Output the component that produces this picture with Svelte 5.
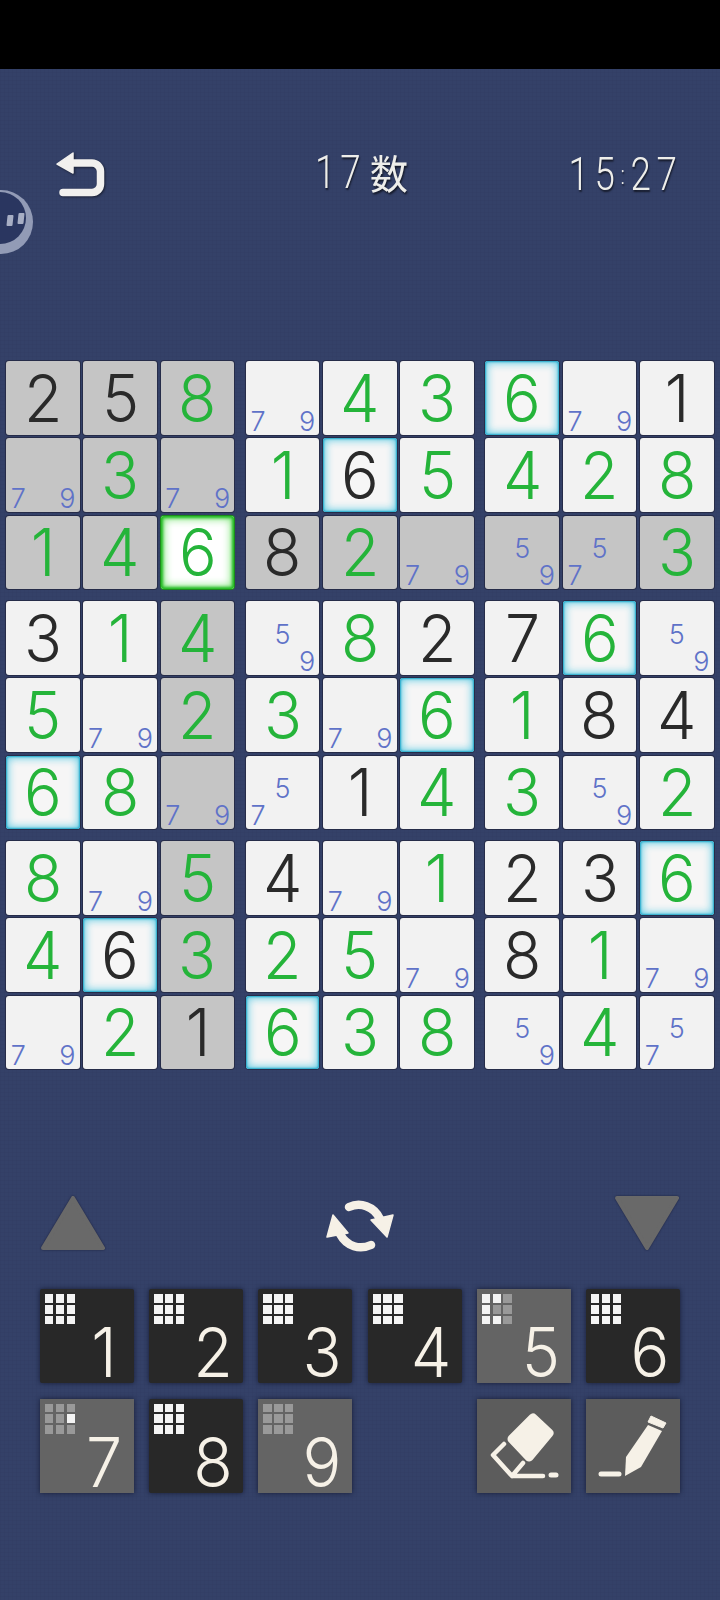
<script>
  // g = filled in green, k = given in black, n = pencil notes
  const rows = [
    'k2 k5 g8 n79 g4 g3 g6 n79 k1',
    'n79 g3 n79 g1 k6 g5 g4 g2 g8',
    'g1 g4 g6 k8 g2 n79 n59 n57 g3',
    'k3 g1 g4 n59 g8 k2 k7 g6 n59',
    'g5 n79 g2 g3 n79 g6 g1 k8 k4',
    'g6 g8 n79 n57 k1 g4 g3 n59 g2',
    'g8 n79 g5 k4 n79 g1 k2 k3 g6',
    'g4 k6 g3 g2 g5 n79 k8 g1 n79',
    'n79 g2 k1 g6 g3 g8 n59 g4 n57'
  ].map((r) => r.split(' '));

  const selected = [2, 2];

  function cell(r, c) {
    const v = rows[r][c];
    const kind = v[0];
    const val = v.slice(1);
    const sel = r === selected[0] && c === selected[1];
    const sameRow = r === selected[0];
    const sameCol = c === selected[1];
    const sameBox = Math.floor(r / 3) === Math.floor(selected[0] / 3) && Math.floor(c / 3) === Math.floor(selected[1] / 3);
    // in row, column or box of the selection, and not the selection itself
    const peer = !sel && (sameRow || sameCol || sameBox);
    const same = !sel && val === '6' && kind !== 'n';
    return { kind, val, sel, peer: peer && !same, same };
  }

  const blocks = [0, 1, 2].flatMap((br) =>
    [0, 1, 2].map((bc) =>
      [0, 1, 2].flatMap((r) => [0, 1, 2].map((c) => cell(br * 3 + r, bc * 3 + c)))
    )
  );

  const on = [1, 1, 1, 1, 1, 1, 1, 1, 1];
  const keys = [
    { n: 1, mask: on },
    { n: 2, mask: on },
    { n: 3, mask: on },
    { n: 4, mask: on },
    { n: 5, dim: true, mask: [1, 1, 0, 1, 0, 0, 1, 1, 0] },
    { n: 6, mask: on },
    { n: 7, dim: true, mask: [0, 0, 0, 0, 0, 1, 0, 0, 0] },
    { n: 8, mask: on },
    { n: 9, dim: true, mask: [0, 0, 0, 0, 0, 0, 0, 0, 0] }
  ];
</script>

<div class="screen">
  <div class="statusbar"></div>

  <header>
    <button class="back" aria-label="back">
      <svg width="50" height="46" viewBox="0 0 50 46">
        <path d="M1 13 17 2V22Z" fill="#f1f0ee" stroke="#f1f0ee" stroke-width="1.5" stroke-linejoin="round" />
        <path d="M15 12H36a8.500 8.500 0 0 1 8.500 8.500V33a8.500 8.500 0 0 1-8.500 8.500H7" fill="none" stroke="#f1f0ee" stroke-width="7.500" stroke-linecap="round" />
      </svg>
    </button>
    <div class="title"><span class="nums">17</span><span class="kanji">数</span></div>
    <div class="time"><span class="nums">15<small>:</small>27</span></div>
  </header>

  <!-- floating helper bubble stuck on the screen edge -->
  <div class="bubble">
    <div class="bubble-in">
      <i></i><i></i>
    </div>
  </div>

  <main class="board">
    {#each blocks as block}
      <div class="block">
        {#each block as c}
          <div class="cell" class:peer={c.peer} class:sel={c.sel} class:same={c.same}>
            {#if c.kind === 'n'}
              <div class="notes">
                {#each [1, 2, 3, 4, 5, 6, 7, 8, 9] as d}
                  <span>{c.val.includes(String(d)) ? d : ''}</span>
                {/each}
              </div>
            {:else}
              <span class="num" class:green={c.kind === 'g'}>{c.val}</span>
            {/if}
          </div>
        {/each}
      </div>
    {/each}
  </main>

  <div class="controls">
    <svg class="tri" width="66" height="60" viewBox="0 0 66 60">
      <path d="M33 5 63 55H3Z" fill="#696969" stroke="#696969" stroke-width="4" stroke-linejoin="round" />
    </svg>
    <svg class="sync" width="80" height="60" viewBox="0 0 80 60">
      <g fill="none" stroke="#f6f1e7" stroke-width="8.500" stroke-linecap="round">
        <path d="M29 14C40 9 54 13 60 26" />
        <path d="M51 52C40 57 27 54 20 41" />
      </g>
      <path d="M51 27 73 22 67 44Z" fill="#f6f1e7" stroke="#f6f1e7" stroke-width="1.500" stroke-linejoin="round" />
      <path d="M13 22 28 40 7 44Z" fill="#f6f1e7" stroke="#f6f1e7" stroke-width="1.500" stroke-linejoin="round" />
    </svg>
    <svg class="tri" width="66" height="60" viewBox="0 0 66 60">
      <path d="M33 55 63 5H3Z" fill="#696969" stroke="#696969" stroke-width="4" stroke-linejoin="round" />
    </svg>
  </div>

  <div class="keypad">
    {#each keys as k}
      <div class="key" class:dim={k.dim}>
        <div class="mini">
          {#each k.mask as m}
            <b class:lit={m}></b>
          {/each}
        </div>
        <span class="keynum">{k.n}</span>
      </div>
    {/each}
    <div class="key tool">
      <svg width="94" height="94" viewBox="0 0 94 94">
        <path d="M56 19 72 34 52 58 35 40Z" fill="#f6f1e7" stroke="#f6f1e7" stroke-width="9" stroke-linejoin="round" />
        <path d="M27 45 16 56 35 77H66M46 64 35 77" fill="none" stroke="#f6f1e7" stroke-width="4.500" stroke-linecap="round" stroke-linejoin="round" />
        <path d="M74 76H79" fill="none" stroke="#f6f1e7" stroke-width="5" stroke-linecap="round" />
      </svg>
    </div>
    <div class="key tool">
      <svg width="94" height="94" viewBox="0 0 94 94">
        <path d="M65 17 80 24 77 29 62 23Z" fill="#f6f1e7" stroke="#f6f1e7" stroke-width="1" stroke-linejoin="round" />
        <path d="M62 26 76 32 55 68 39 77 40 58Z" fill="#f6f1e7" />
        <path d="M15 75H33" fill="none" stroke="#f6f1e7" stroke-width="5" stroke-linecap="round" />
      </svg>
    </div>
  </div>
</div>

<style>
  :global(body) {
    background: #344168;
  }

  .screen {
    position: relative;
    width: 720px;
    height: 1600px;
    overflow: hidden;
    background-color: #344168;
    background-image:
      linear-gradient(rgba(0, 0, 0, 0.025) 1px, transparent 1px),
      linear-gradient(90deg, rgba(0, 0, 0, 0.025) 1px, transparent 1px);
    background-size: 4px 4px;
    font-family: Inter, "Noto Sans", sans-serif;
  }

  .statusbar {
    height: 69px;
    background: #000;
  }

  header {
    display: grid;
    grid-template-columns: 1fr auto 1fr;
    align-items: center;
    height: 46px;
    margin-top: 78px;
    padding: 0 37px 0 56px;
    color: #eeeeea;
    text-shadow: 1px 2px 2px rgba(0, 0, 0, 0.6);
  }

  .back {
    display: block;
    width: 50px;
    height: 46px;
    padding: 0;
    border: 0;
    background: none;
    filter: drop-shadow(1px 1px 1px rgba(0, 0, 0, 0.5));
  }

  .title {
    display: flex;
    align-items: center;
    margin: -4px 0 0 -15px;
    font-family: Roboto, sans-serif;
    font-weight: 300;
  }

  .nums {
    display: inline-block;
    font-family: Roboto, sans-serif;
    font-weight: 350;
    font-size: 46px;
    white-space: nowrap;
  }

  .title .nums {
    width: 54px;
    letter-spacing: 6px;
    transform: scaleX(0.8);
    transform-origin: left center;
  }

  .kanji {
    font-family: "Noto Sans CJK JP", sans-serif;
    font-size: 40px;
    font-weight: 400;
    transform: scaleX(0.95);
  }

  .time {
    justify-self: end;
  }

  .time .nums {
    transform: scaleX(0.8);
    transform-origin: right center;
    letter-spacing: 7px;
  }

  .time small {
    font-size: 26px;
    vertical-align: 6px;
  }

  .bubble {
    position: absolute;
    left: -31px;
    top: 190px;
    width: 64px;
    height: 64px;
    border-radius: 50%;
    background: #929bb6;
  }

  .bubble-in {
    position: absolute;
    left: 5px;
    top: 2px;
    width: 52px;
    height: 52px;
    border-radius: 50%;
    background: #2a3660;
  }

  .bubble-in i {
    position: absolute;
    top: 23px;
    width: 6px;
    height: 11px;
    background: #a7aec4;
    border-radius: 1px;
    transform: skewX(-6deg);
  }

  .bubble-in i:first-child {
    left: 33px;
  }

  .bubble-in i:last-child {
    left: 44px;
    top: 21px;
  }

  .board {
    display: grid;
    grid-template-columns: repeat(3, 228.4px);
    column-gap: 11.3px;
    row-gap: 11.6px;
    margin: 168px 0 0 6px;
  }

  .block {
    display: grid;
    grid-template-columns: repeat(3, 73.8px);
    grid-auto-rows: 73.8px;
    gap: 3.5px;
  }

  .cell {
    display: flex;
    align-items: center;
    justify-content: center;
    border-radius: 3px;
    background: #f2f2f2;
    box-shadow: 0 0 0 1px #262c49;
  }

  .cell.peer {
    background: #c5c5c5;
  }

  .cell.same {
    background: #f6f6f6;
    box-shadow: 0 0 0 1px #262c49, inset 0 0 2px 1px #1fa6c8, inset 0 0 8px 2px #62cce4;
  }

  .cell.sel {
    background: #fff;
    box-shadow: 0 0 0 1px #1c8a1c, inset 0 0 3px 2px #1fb81f, inset 0 0 8px 3px #7fe57a;
  }

  .num {
    display: block;
    font-size: 66px;
    line-height: 1;
    font-weight: 320;
    color: #2a2a2a;
    transform: scaleX(0.95);
  }

  .num.green {
    color: #25b43a;
    font-weight: 340;
  }

  .notes {
    display: grid;
    grid-template-columns: repeat(3, 1fr);
    grid-template-rows: repeat(3, 1fr);
    width: 100%;
    height: 100%;
  }

  .notes span {
    display: flex;
    align-items: center;
    justify-content: center;
    font-size: 27px;
    line-height: 1;
    font-weight: 300;
    color: #5f72c8;
  }

  .controls {
    display: flex;
    justify-content: space-between;
    align-items: center;
    height: 60px;
    margin: 124px 40px 0 40px;
  }

  .tri {
    filter: drop-shadow(0 0 1px #1e2440);
  }

  .keypad {
    display: grid;
    grid-template-columns: repeat(6, 94px);
    grid-auto-rows: 94px;
    gap: 15.2px;
    margin: 36px 0 0 40px;
  }

  .key {
    position: relative;
    background: #282828;
    box-shadow: 0 0 5px rgba(15, 20, 40, 0.8);
    border-radius: 2px;
    color: #f6f1e7;
  }

  .key.dim {
    background: #646464;
    border-radius: 0;
  }

  .key.tool {
    background: #5c5c5c;
    border-radius: 0;
  }

  .key:nth-child(10) {
    grid-column: 5;
  }

  .key svg {
    display: block;
  }

  .mini {
    display: grid;
    grid-template-columns: repeat(3, 8.4px);
    grid-auto-rows: 8.4px;
    gap: 2.4px;
    padding: 5px 0 0 5px;
  }

  .mini b {
    background: #999;
  }

  .mini b.lit {
    background: #f4f4f4;
  }

  .keynum {
    position: absolute;
    left: 68%;
    bottom: -3px;
    font-size: 68px;
    line-height: 1;
    font-weight: 300;
    transform: translateX(-50%) scaleX(0.95);
  }
</style>
